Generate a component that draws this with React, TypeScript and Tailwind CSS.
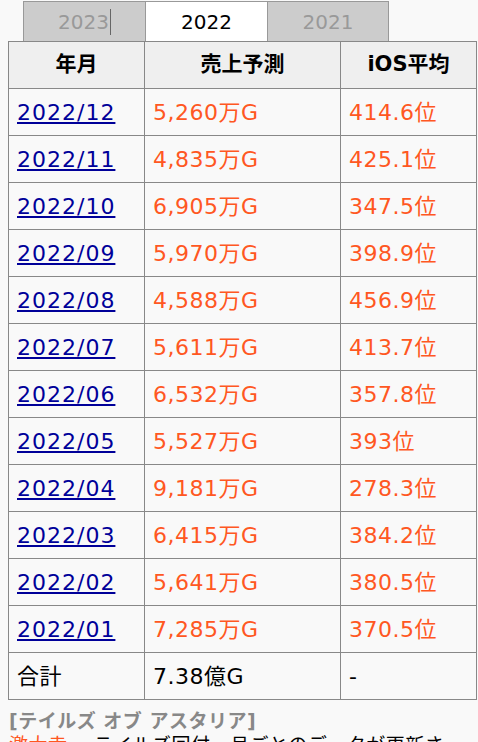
import React from "react";

const rows: [string, string, string][] = [
  ["2022/12", "5,260万G", "414.6位"],
  ["2022/11", "4,835万G", "425.1位"],
  ["2022/10", "6,905万G", "347.5位"],
  ["2022/09", "5,970万G", "398.9位"],
  ["2022/08", "4,588万G", "456.9位"],
  ["2022/07", "5,611万G", "413.7位"],
  ["2022/06", "6,532万G", "357.8位"],
  ["2022/05", "5,527万G", "393位"],
  ["2022/04", "9,181万G", "278.3位"],
  ["2022/03", "6,415万G", "384.2位"],
  ["2022/02", "5,641万G", "380.5位"],
  ["2022/01", "7,285万G", "370.5位"],
];

const font = {
  fontFamily: '"DejaVu Sans", Verdana, "Noto Sans CJK JP", sans-serif',
};

export default function App() {
  return (
    <div className="h-[742px] w-[478px] overflow-hidden bg-[#f9f9f9] text-black" style={font}>
      <div className="flex pl-[23px] pt-px">
        <div className="flex h-[40px] w-[122px] items-center justify-center border-l border-t border-[#999] bg-[#cccccc] text-[20px] text-[#999]">
          <span>2023</span>
          <span className="ml-px inline-block h-[26px] w-px bg-[#666]" />
        </div>
        <div className="flex h-[40px] w-[122px] items-center justify-center border-l border-t border-[#999] bg-white text-[20px] text-black">
          2022
        </div>
        <div className="flex h-[40px] w-[122px] items-center justify-center border-x border-t border-[#999] bg-[#cccccc] text-[20px] text-[#999]">
          2021
        </div>
      </div>
      <div className="ml-[8px] w-[469px] border-l border-t border-[#888]">
        <div className="grid grid-cols-[136px_196px_136px] bg-[#efefef] text-[21px] font-bold">
          <div className="flex h-[47px] items-center justify-center border-b border-r border-[#888]">年月</div>
          <div className="flex h-[47px] items-center justify-center border-b border-r border-[#888]">売上予測</div>
          <div className="flex h-[47px] items-center justify-center border-b border-r border-[#888]">iOS平均</div>
        </div>
        {rows.map(([m, s, r]) => (
          <div key={m} className="grid grid-cols-[136px_196px_136px] text-[22px] tracking-[0.5px]">
            <div className="flex h-[47px] items-center border-b border-r border-[#888] pl-[8px]">
              <a href="#" className="tracking-[1px] text-[#000099] underline">{m}</a>
            </div>
            <div className="flex h-[47px] items-center border-b border-r border-[#888] pl-[8px] text-[#ff5722]">{s}</div>
            <div className="flex h-[47px] items-center border-b border-r border-[#888] pl-[8px] text-[#ff5722]">{r}</div>
          </div>
        ))}
        <div className="grid grid-cols-[136px_196px_136px] text-[22px] tracking-[0.5px]">
          <div className="flex h-[47px] items-center border-b border-r border-[#888] pl-[8px]">合計</div>
          <div className="flex h-[47px] items-center border-b border-r border-[#888] pl-[8px]">7.38億G</div>
          <div className="flex h-[47px] items-center border-b border-r border-[#888] pl-[8px]">-</div>
        </div>
      </div>
      <div className="pl-[9px] pt-[9px] text-[19px] leading-[24px] tracking-[0.5px]">
        <div className="font-bold text-[#888]">[テイルズ オブ アスタリア]</div>
        <div className="whitespace-nowrap">
          <span className="text-[#ff5722]">激大幸</span>
          <span> ・テイルズ回付・月ごとのデータが更新さ</span>
        </div>
      </div>
    </div>
  );
}
